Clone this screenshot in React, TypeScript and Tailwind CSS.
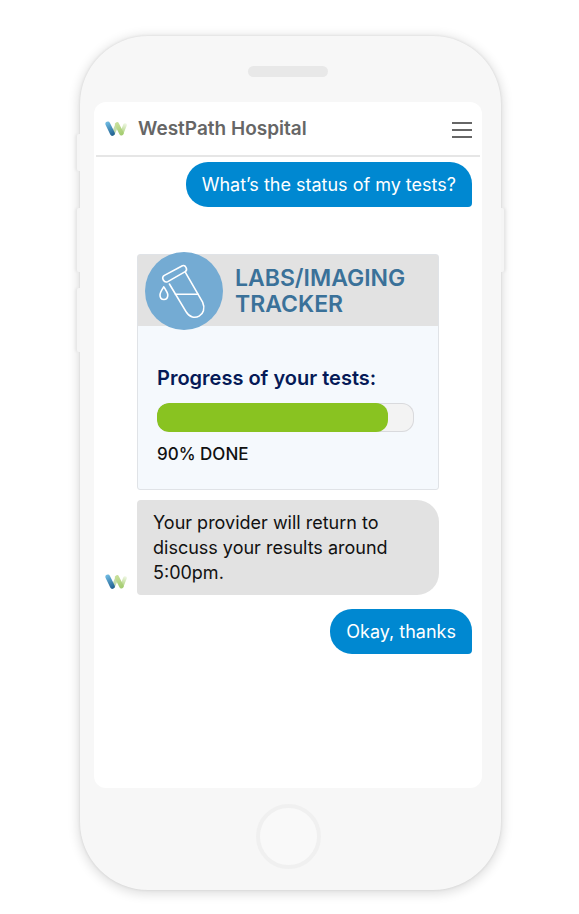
import type { ReactNode } from "react";

function Logo({ id }: { id: string }) {
  return (
    <svg viewBox="0 0 22 16" className="h-4 w-[22px] shrink-0" fill="none" strokeLinecap="round" aria-hidden="true">
      <defs>
        <linearGradient id={`${id}-blue`} x1="2" y1="2" x2="9" y2="14" gradientUnits="userSpaceOnUse">
          <stop offset="0" stopColor="#6bb6de" />
          <stop offset="1" stopColor="#1f5f8f" />
        </linearGradient>
        <linearGradient id={`${id}-green`} x1="12" y1="3" x2="17" y2="13" gradientUnits="userSpaceOnUse">
          <stop offset="0" stopColor="#c6de98" />
          <stop offset="1" stopColor="#a5cd72" />
        </linearGradient>
        <linearGradient id={`${id}-fade`} x1="17" y1="13" x2="21" y2="2" gradientUnits="userSpaceOnUse">
          <stop offset="0" stopColor="#a9d078" />
          <stop offset="1" stopColor="#f3f9ea" />
        </linearGradient>
      </defs>
      <path d="M8.4 12.4 11.8 4" stroke="#c4dcae" strokeWidth="3.4" />
      <path d="M16.8 12.2 20 4" stroke={`url(#${id}-fade)`} strokeWidth="3.6" />
      <path d="M12 3.4 16.4 12.2" stroke={`url(#${id}-green)`} strokeWidth="4.4" />
      <path d="M2.8 3 7.4 12.4" stroke={`url(#${id}-blue)`} strokeWidth="4.8" />
    </svg>
  );
}

function TestTube() {
  return (
    <svg viewBox="0 0 78 78" className="h-full w-full" fill="none" stroke="#fff" strokeWidth="1.6" strokeLinecap="round" strokeLinejoin="round" aria-hidden="true">
      <path d="M19.4 23.4 37.4 13.8C40.4 12.4 43.2 17.8 40.2 19.6L22.8 29.6C19 31.4 15.8 25.6 19.4 23.4Z" />
      <path d="M24.4 32 41 59.6C48 71.6 63.4 62.8 57.6 50.2L40.4 20.4" />
      <path d="M30.4 42.2H53" />
      <path d="M18.8 34.8C16.6 38.4 15 40.6 15 43C15 49 22.8 49 22.8 43C22.8 40.6 21 38.4 18.8 34.8Z" />
    </svg>
  );
}

function SentMessage({ children }: { children: ReactNode }) {
  return (
    <p className="self-end rounded-[22px] rounded-br-[4px] bg-[#0088d1] px-4 py-[10px] text-[18px] leading-[25px] text-white">
      {children}
    </p>
  );
}

function TrackerCard({ percent }: { percent: number }) {
  return (
    <section className="rounded-[3px] border border-[#e0e3e7] bg-[#f5f9fd]">
      <header className="flex h-[71px] items-center gap-3 bg-[#e2e2e2] pl-[7px]">
        <div className="size-[78px] shrink-0 rounded-full bg-[#74abd3]">
          <TestTube />
        </div>
        <h2 className="text-[23px] leading-[26px] font-semibold text-[#3a7199]">
          LABS/IMAGING
          <br />
          TRACKER
        </h2>
      </header>
      <div className="pt-[39px] pr-6 pb-[22px] pl-[19px]">
        <h3 id="progress-label" className="text-[20px] leading-[26px] font-semibold text-[#051a57]">
          Progress of your tests:
        </h3>
        <div
          role="progressbar"
          aria-labelledby="progress-label"
          aria-valuenow={percent}
          aria-valuemin={0}
          aria-valuemax={100}
          className="mt-3 h-[29px] overflow-hidden rounded-[12px] bg-[#f3f3f3] inset-ring inset-ring-[#d9dadd]"
        >
          <div className="h-full rounded-[12px] bg-[#89c321]" style={{ width: `${percent}%` }} />
        </div>
        <p className="mt-[10px] text-[17px] leading-[25px] font-medium text-[#111]">{percent}% DONE</p>
      </div>
    </section>
  );
}

export default function App() {
  return (
    <main className="bg-white pt-9 pr-[78px] pb-6 pl-20 font-['Inter','Liberation_Sans',sans-serif]">
      <div className="relative mx-auto flex w-full max-w-md flex-col items-stretch rounded-[68px] bg-[#f7f7f7] pt-[30px] pr-[19px] pb-[21px] pl-[14px] shadow-[0_2px_11px_2px_rgba(0,0,0,0.13),0_0_3px_rgba(0,0,0,0.10)]">
        <span className="absolute top-[98px] -left-[3px] h-[37px] w-[3px] rounded-l-[2px] bg-[#f5f5f5] shadow-[-2px_0_3px_rgba(0,0,0,0.06)]" />
        <span className="absolute top-[172px] -left-[3px] h-16 w-[3px] rounded-l-[2px] bg-[#f5f5f5] shadow-[-2px_0_3px_rgba(0,0,0,0.06)]" />
        <span className="absolute top-[252px] -left-[3px] h-16 w-[3px] rounded-l-[2px] bg-[#f5f5f5] shadow-[-2px_0_3px_rgba(0,0,0,0.06)]" />
        <span className="absolute top-[172px] -right-[3px] h-16 w-[3px] rounded-r-[2px] bg-[#f5f5f5] shadow-[2px_0_3px_rgba(0,0,0,0.06)]" />

        <div className="h-[11px] w-20 self-center rounded-full bg-[#e8e8e8]" />

        <div className="mt-[25px] flex min-h-[686px] flex-col rounded-[12px] bg-white px-[2px]">
          <header className="flex h-[55px] items-center gap-[11px] border-b-2 border-[#e6e6e6] pr-[8px] pl-[9px]">
            <Logo id="brand" />
            <h1 className="flex-1 text-[19px] leading-[25px] font-semibold text-[#666]">WestPath Hospital</h1>
            <button type="button" aria-label="Menu" className="flex w-5 flex-col gap-[5px] pt-[2px]">
              <span className="h-[2px] w-full bg-[#666]" />
              <span className="h-[2px] w-full bg-[#666]" />
              <span className="h-[2px] w-full bg-[#666]" />
            </button>
          </header>

          <div className="flex flex-col pt-[5px] pr-2 pl-[9px]">
            <SentMessage>What’s the status of my tests?</SentMessage>

            <div className="mt-[47px] mr-[33px] ml-8">
              <TrackerCard percent={90} />
            </div>

            <div className="mt-[10px] mr-[33px] flex items-end gap-[10px]">
              <div className="pb-[5px]">
                <Logo id="avatar" />
              </div>
              <p className="flex-1 rounded-l-[4px] rounded-r-[22px] bg-[#e2e2e2] px-4 py-[10px] text-[18px] leading-[25px] text-[#111]">
                Your provider will return to discuss your results around 5:00pm.
              </p>
            </div>

            <div className="mt-[14px] flex flex-col">
              <SentMessage>Okay, thanks</SentMessage>
            </div>
          </div>
        </div>

        <button
          type="button"
          aria-label="Home"
          className="mt-4 size-[65px] self-center rounded-full border-4 border-[#f0f0f0] bg-[#f9f9f9]"
        />
      </div>
    </main>
  );
}
